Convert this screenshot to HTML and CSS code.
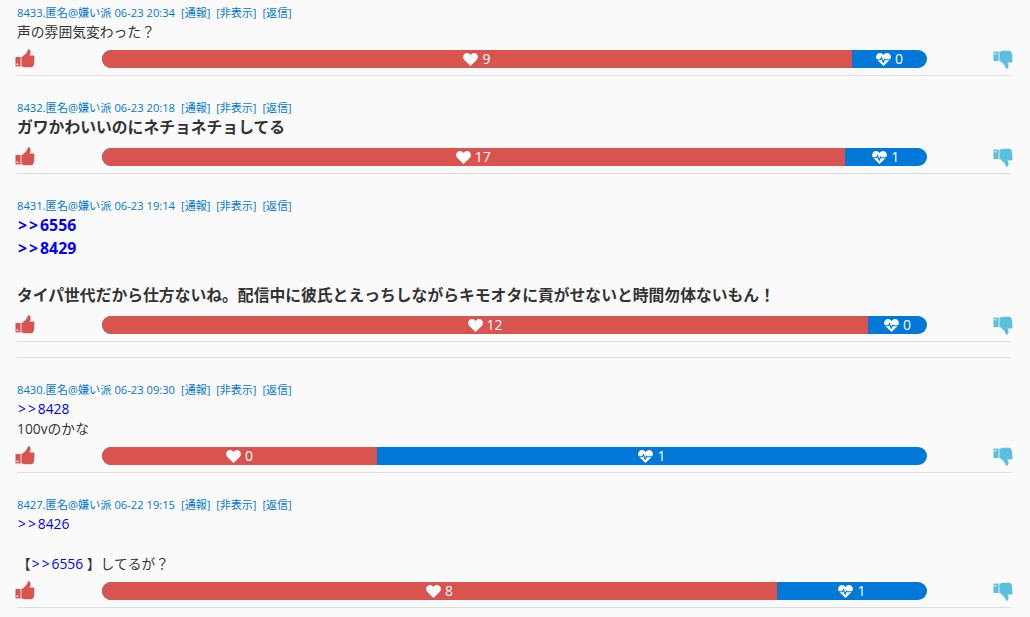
FILE: index.html
```html
<!DOCTYPE html>
<html lang="ja">
  <head>
    <meta charset="UTF-8" />
    <meta name="viewport" content="width=device-width, initial-scale=1.0" />
    <title>Comments</title>
    <link rel="stylesheet" href="styles.css">
  </head>
  <body>
    <svg class="defs" width="0" height="0">
      <symbol id="thumb" viewBox="0 0 20 19">
        <path d="M0.500 8h4.700v9.400H0.500z" />
        <path class="thumb-stripe" d="M5.200 8h1.800v9.400H5.200z" />
        <path d="M7 8l3.500-3C12 3.500 12.500 2 13 .3c2-.2 3 1.700 2.500 3.700l-1 2.500H18c1.500 0 2 1.500 1.300 3L19 15c-.2 2-1.500 3.300-3 3.300h-5c-1.500 0-3-.3-4-1z" />
        <path class="thumb-dot" d="M1.500 14.600h1.800v1.400H1.500z" />
      </symbol>
      <symbol id="heart" viewBox="0 0 16 14">
        <path d="M8 14 1.300 7.500C-.4 5.800-.4 3 1.200 1.400 2.900-.3 5.600-.3 7.200 1.300L8 2.100l.8-.8c1.600-1.600 4.300-1.600 6 .1 1.600 1.600 1.600 4.400-.1 6.100z" />
      </symbol>
      <symbol id="pulse" viewBox="0 0 16 14">
        <path d="M8 14 1.300 7.500C-.4 5.800-.4 3 1.200 1.400 2.900-.3 5.600-.3 7.200 1.300L8 2.100l.8-.8c1.600-1.600 4.300-1.600 6 .1 1.600 1.600 1.600 4.400-.1 6.100z" />
        <path class="pulse-line" d="M0 7.200h4.600l1.300-2.200 1.700 5 1.500-3.400.6.600H16" />
      </symbol>
    </svg>

    <div class="thread">
      <div class="post">
        <div class="meta">
          <span>8433.匿名@嫌い派 06-23 20:34</span>
          <a href="#">[通報]</a><a href="#">[非表示]</a><a href="#">[返信]</a>
        </div>
        <div class="body">声の雰囲気変わった？</div>
        <div class="vote">
          <svg class="thumb thumb-up"><use href="#thumb" /></svg>
          <div class="bar">
            <div class="bar-good" style="width: 90.91%"><svg class="ico"><use href="#heart" /></svg>9</div>
            <div class="bar-bad"><svg class="ico"><use href="#pulse" /></svg>0</div>
          </div>
          <svg class="thumb thumb-down"><use href="#thumb" /></svg>
        </div>
      </div>

      <div class="post">
        <div class="meta">
          <span>8432.匿名@嫌い派 06-23 20:18</span>
          <a href="#">[通報]</a><a href="#">[非表示]</a><a href="#">[返信]</a>
        </div>
        <div class="body big">ガワかわいいのにネチョネチョしてる</div>
        <div class="vote">
          <svg class="thumb thumb-up"><use href="#thumb" /></svg>
          <div class="bar">
            <div class="bar-good" style="width: 90%"><svg class="ico"><use href="#heart" /></svg>17</div>
            <div class="bar-bad"><svg class="ico"><use href="#pulse" /></svg>1</div>
          </div>
          <svg class="thumb thumb-down"><use href="#thumb" /></svg>
        </div>
      </div>

      <div class="post">
        <div class="meta">
          <span>8431.匿名@嫌い派 06-23 19:14</span>
          <a href="#">[通報]</a><a href="#">[非表示]</a><a href="#">[返信]</a>
        </div>
        <div class="body big">
          <a class="anchor" href="#"><span class="gt">&gt;&gt;</span>6556</a><br>
          <a class="anchor" href="#"><span class="gt">&gt;&gt;</span>8429</a><br>
          <br>
          タイパ世代だから仕方ないね。配信中に彼氏とえっちしながらキモオタに貢がせないと時間勿体ないもん！
        </div>
        <div class="vote">
          <svg class="thumb thumb-up"><use href="#thumb" /></svg>
          <div class="bar">
            <div class="bar-good" style="width: 92.86%"><svg class="ico"><use href="#heart" /></svg>12</div>
            <div class="bar-bad"><svg class="ico"><use href="#pulse" /></svg>0</div>
          </div>
          <svg class="thumb thumb-down"><use href="#thumb" /></svg>
        </div>
      </div>

      <div class="gap"></div>

      <div class="post">
        <div class="meta">
          <span>8430.匿名@嫌い派 06-23 09:30</span>
          <a href="#">[通報]</a><a href="#">[非表示]</a><a href="#">[返信]</a>
        </div>
        <div class="body">
          <a class="anchor" href="#"><span class="gt">&gt;&gt;</span>8428</a><br>
          100vのかな
        </div>
        <div class="vote">
          <svg class="thumb thumb-up"><use href="#thumb" /></svg>
          <div class="bar">
            <div class="bar-good" style="width: 33.33%"><svg class="ico"><use href="#heart" /></svg>0</div>
            <div class="bar-bad"><svg class="ico"><use href="#pulse" /></svg>1</div>
          </div>
          <svg class="thumb thumb-down"><use href="#thumb" /></svg>
        </div>
      </div>

      <div class="post">
        <div class="meta">
          <span>8427.匿名@嫌い派 06-22 19:15</span>
          <a href="#">[通報]</a><a href="#">[非表示]</a><a href="#">[返信]</a>
        </div>
        <div class="body">
          <a class="anchor" href="#"><span class="gt">&gt;&gt;</span>8426</a><br>
          <br>
          【<a class="anchor" href="#"><span class="gt">&gt;&gt;</span>6556</a> 】してるが？
        </div>
        <div class="vote">
          <svg class="thumb thumb-up"><use href="#thumb" /></svg>
          <div class="bar">
            <div class="bar-good" style="width: 81.82%"><svg class="ico"><use href="#heart" /></svg>8</div>
            <div class="bar-bad"><svg class="ico"><use href="#pulse" /></svg>1</div>
          </div>
          <svg class="thumb thumb-down"><use href="#thumb" /></svg>
        </div>
      </div>
    </div>
  </body>
</html>
```

FILE: styles.css
```css
body {
  font-family: "Open Sans", "Noto Sans CJK JP", sans-serif;
  margin: 0;
  padding: 0;
  background-color: #fafafa;
  color: #333;
}

a {
  text-decoration: none;
}

.defs {
  display: block;
}

.thread {
  margin: 0 19px 0 17px;
}

.post {
  padding: 22px 0 7px;
  border-bottom: 1px solid #ddd;
}

.post:first-child {
  padding-top: 3px;
}

.gap {
  height: 15px;
  border-bottom: 1px solid #ddd;
}

.meta {
  display: flex;
  font-size: 11px;
  line-height: 19px;
  color: #0078d7;
}

.meta span {
  font-size: 11.2px;
  margin-right: 6px;
}

.meta a {
  color: #0078d7;
  margin-right: 6px;
}

.body {
  font-size: 13.8px;
  line-height: 20px;
}

.body.big {
  font-size: 15.8px;
  font-weight: bold;
  line-height: 23.2px;
  margin: -1px 0 9px;
}

.anchor {
  color: #00f;
}

.gt {
  letter-spacing: 2px;
  margin-left: 1px;
}

.vote {
  display: flex;
  height: 18px;
  margin: 8px -2px 0;
}

.thumb {
  flex: none;
  width: 20px;
  height: 19px;
}

.thumb-up {
  margin-top: -1px;
  fill: #d9534f;
}

.thumb-down {
  fill: #5bc0de;
  transform: scaleY(-1);
}

.thumb-stripe {
  opacity: 0.6;
}

.thumb-dot {
  fill: #fafafa;
}

.bar {
  flex: 1;
  display: flex;
  height: 18px;
  margin: 0 66px 0 67px;
  border-radius: 9px;
  overflow: hidden;
  font-size: 14px;
  line-height: 18px;
  color: #fff;
  background-color: #0078d7;
}

.bar-good,
.bar-bad {
  display: flex;
  justify-content: center;
  align-items: center;
}

.bar-good {
  background-color: #d9534f;
}

.bar-bad {
  flex: 1;
}

.ico {
  width: 15px;
  height: 13px;
  margin-right: 4px;
  fill: #fff;
}

.pulse-line {
  fill: none;
  stroke: #0078d7;
  stroke-width: 1.200;
}
```
